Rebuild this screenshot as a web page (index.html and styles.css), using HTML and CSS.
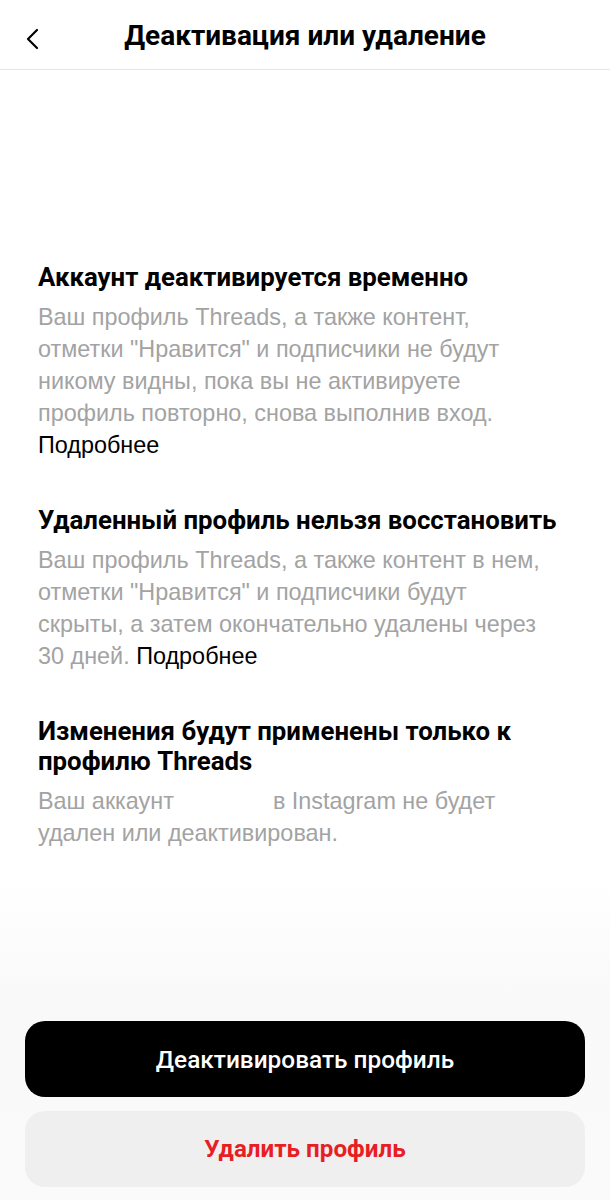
FILE: index.html
```html
<!DOCTYPE html>
<html lang="ru">
<head>
<meta charset="utf-8">
<title>Деактивация или удаление</title>
<link rel="stylesheet" href="styles.css">
</head>
<body>
<div class="page">
  <header class="topbar">
    <button class="back" aria-label="Назад">
      <svg width="14" height="22" viewBox="0 0 14 22"><path d="M12 2 L3 11 L12 20" fill="none" stroke="#000" stroke-width="2.2" stroke-linecap="round" stroke-linejoin="round"/></svg>
    </button>
    <h1 class="title">Деактивация или удаление</h1>
  </header>
  <main class="content">
    <section class="block">
      <h2 class="heading">Аккаунт деактивируется временно</h2>
      <p class="text">Ваш профиль Threads, а также контент, отметки "Нравится" и подписчики не будут никому видны, пока вы не активируете профиль повторно, снова выполнив вход. <a class="more">Подробнее</a></p>
    </section>
    <section class="block">
      <h2 class="heading">Удаленный профиль нельзя восстановить</h2>
      <p class="text">Ваш профиль Threads, а также контент в нем, отметки "Нравится" и подписчики будут скрыты, а затем окончательно удалены через 30 дней. <a class="more">Подробнее</a></p>
    </section>
    <section class="block">
      <h2 class="heading">Изменения будут применены только к профилю Threads</h2>
      <p class="text">Ваш аккаунт <span class="redacted"></span> в Instagram не будет удален или деактивирован.</p>
    </section>
  </main>
  <footer class="actions">
    <button class="btn btn-primary">Деактивировать профиль</button>
    <button class="btn btn-secondary">Удалить профиль</button>
  </footer>
</div>
</body>
</html>
```
FILE: styles.css
```css
* { box-sizing: border-box; }
html, body { margin: 0; padding: 0; background: #fff; }
body { font-family: Roboto, "Liberation Sans", sans-serif; color: #000; }
.page {
  width: 610px;
  height: 1200px;
  display: flex;
  flex-direction: column;
  background: linear-gradient(#ffffff 0, #ffffff 880px, #f9f9f9 1000px, #fafafa 1200px);
}
.topbar {
  height: 70px;
  border-bottom: 1px solid #e6e6e6;
  display: flex;
  align-items: center;
  justify-content: center;
  position: relative;
  flex-shrink: 0;
}
.back {
  position: absolute;
  left: 21px;
  top: 27px;
  background: none;
  border: 0;
  padding: 0;
  width: 22px;
  height: 24px;
  display: flex;
  align-items: center;
  justify-content: center;
}
.title {
  margin: 0;
  font-family: Roboto, sans-serif;
  font-weight: 700;
  font-size: 28px;
  line-height: 32px;
  padding-top: 2px;
}
.content {
  padding: 192px 56px 0 38px;
  display: flex;
  flex-direction: column;
  gap: 44px;
}
.block { margin: 0; }
.heading {
  margin: 0 -40px 9px 0;
  font-family: Roboto, sans-serif;
  font-weight: 700;
  font-size: 25.8px;
  line-height: 30px;
}
.text {
  margin: 0;
  font-family: "Liberation Sans", Arial, sans-serif;
  font-size: 23.4px;
  line-height: 32px;
  color: #a3a3a3;
}
.more { color: #000; }
.redacted { display: inline-block; width: 86px; }
.actions {
  margin-top: auto;
  padding: 0 25px 13px;
  display: flex;
  flex-direction: column;
  gap: 14px;
}
.btn {
  height: 76px;
  border: 0;
  border-radius: 20px;
  font-family: Roboto, sans-serif;
  font-size: 24.4px;
  font-weight: 500;
  width: 100%;
}
.btn-primary { background: #000; color: #fff; }
.btn-secondary { background: #efefef; color: #e81e25; font-size: 24.2px; font-weight: 700; }
```
